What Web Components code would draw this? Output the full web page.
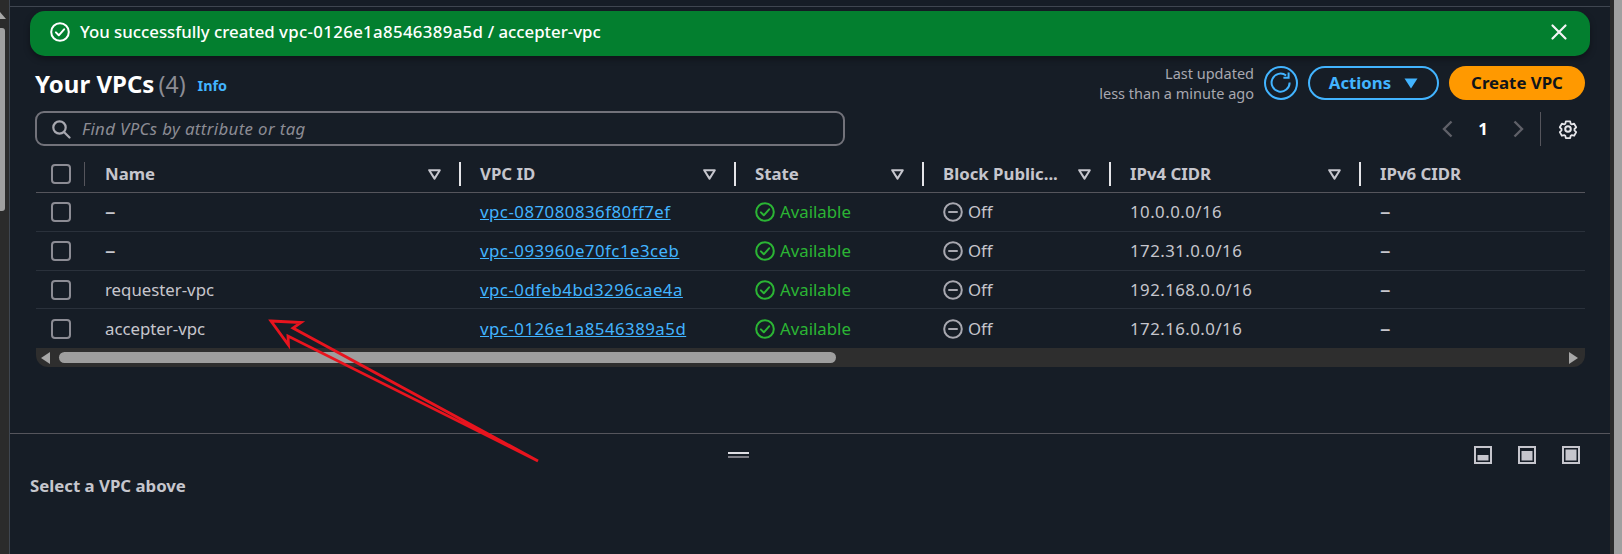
<!DOCTYPE html>
<html lang="en"><head><meta charset="utf-8"><title>Your VPCs</title>
<style>
html,body{margin:0;padding:0;height:554px;overflow:hidden;background:#161d26}
body{font:16.8px/24px "Noto Sans",sans-serif;color:#c6c6cd;position:relative}
</style></head><body>
<vpc-console></vpc-console>
<script>
const css=`*{box-sizing:border-box}svg{display:block;flex:none}`;
function el(name,html){
  customElements.define(name,class extends HTMLElement{
    constructor(){super();const r=this.attachShadow({mode:'open'});
      r.innerHTML='<style>'+css+html.css+'</style>'+(typeof html.body==='function'?html.body(this):html.body);}
  });
}
const CHECK=(c,s)=>`<svg width="${s}" height="${s}" viewBox="0 0 20 20" fill="none" stroke="${c}" stroke-width="2" stroke-linecap="round" stroke-linejoin="round"><circle cx="10" cy="10" r="8.8"/><path d="M5.9 10.4l2.9 2.9 5.3-6"/></svg>`;
el('flash-bar',{css:`:host{display:flex;align-items:center;height:45px;margin:4px 20px 0;padding:0 22px 3px 20px;background:#037f2f;border-radius:15px;color:#fff;box-shadow:0 3px 6px rgba(0,0,0,.35)}
span{margin-left:10px;flex:1;font-weight:500}b{font-weight:500;letter-spacing:.35px}`,
body:`${CHECK('#fff',20)}<span>You successfully created <b>vpc-0126e1a8546389a5d</b> / accepter-vpc</span>
<svg width="18" height="18" viewBox="0 0 18 18" fill="none" stroke="#f4f4f6" stroke-width="2.2" stroke-linecap="round"><path d="M2.5 2.5l13 13M15.5 2.5l-13 13"/></svg>`});

el('page-header',{css:`:host{display:flex;align-items:center;height:34px;margin:10px 25px 0 25px}
h1{margin:2px 0 0;font-size:24px;line-height:34px;font-weight:700;color:#fff}
h1 i{font-style:normal;font-weight:400;color:#8c8c94;font-size:23px;margin-left:-2px}
a{margin-left:12px;font-size:14.4px;font-weight:700;color:#42b4ff;margin-top:5px}
.upd{margin-left:auto;text-align:right;font-size:14.5px;line-height:20px;color:#a8a8b0}
.ref{width:34px;height:34px;margin-left:10px;border:2px solid #42b4ff;border-radius:50%;display:flex;align-items:center;justify-content:center}
.act{width:131px;height:34px;margin-left:10px;border:2px solid #42b4ff;border-radius:17px;display:flex;align-items:center;justify-content:center;gap:13px;color:#42b4ff;font-weight:700}
.new{width:136px;height:34px;margin-left:10px;border-radius:17px;background:#ff9900;color:#0f141a;font-weight:700;display:flex;align-items:center;justify-content:center}`,
body:`<h1>Your VPCs <i>(4)</i></h1><a>Info</a>
<div class="upd">Last updated<br>less than a minute ago</div>
<div class="ref"><svg width="24" height="24" viewBox="0 0 24 24" fill="none" stroke="#42b4ff" stroke-width="2"><path d="M20.6 11.5a9 9 0 1 1-3.5-7"/><path d="M19.6 1.5v5.2h-5.2" stroke-linejoin="miter"/></svg></div>
<div class="act">Actions<svg width="14" height="11" viewBox="0 0 14 11"><path d="M0.5 0.5h13L7 10.5z" fill="#42b4ff"/></svg></div>
<div class="new">Create VPC</div>`});

el('filter-row',{css:`:host{display:flex;align-items:center;height:35px;margin:11px 0 0 25px}
.s{width:810px;height:35px;border:2px solid #72727a;border-radius:9px;display:flex;align-items:center;padding-left:14px;gap:11px;color:#8c8c94;font-style:italic;letter-spacing:.38px}
.p{margin-left:auto;display:flex;align-items:center;height:34px}
.n{width:60px;text-align:center;color:#fff;font-weight:700;font-size:16.8px}
.bar{width:1px;height:34px;background:#55555c;margin:0 17px 0 16px}
.end{margin-right:32px}`,
body:`<div class="s"><svg width="20" height="20" viewBox="0 0 20 20" fill="none" stroke="#a8a8b0" stroke-width="2.2" stroke-linecap="round"><circle cx="8.5" cy="8.5" r="6.2"/><path d="M13 13l5.5 5.5"/></svg><span>Find VPCs by attribute or tag</span></div>
<div class="p"><svg width="11" height="18" viewBox="0 0 11 18" fill="none" stroke="#5f6068" stroke-width="2.4"><path d="M9.5 1.5L2 9l7.5 7.5"/></svg>
<div class="n">1</div>
<svg width="11" height="18" viewBox="0 0 11 18" fill="none" stroke="#5f6068" stroke-width="2.4"><path d="M1.5 1.5L9 9l-7.5 7.5"/></svg>
<div class="bar"></div>
<svg class="end" width="20" height="20" viewBox="0 0 20 20" fill="none" stroke="#e6e6ea" stroke-width="2" stroke-linejoin="round"><circle cx="10" cy="10" r="2.8"/><path d="M7.6 1.5h4.8l.6 2.6 1.3.8 2.5-.8 2.3 4-1.9 1.9 0 1.6 1.9 1.9-2.3 4-2.5-.8-1.3.8-.6 2.6-4.8 0-.6-2.6-1.3-.8-2.5.8-2.3-4 1.9-1.9 0-1.6-1.9-1.9 2.3-4 2.5.8 1.3-.8z" transform="translate(1 1) scale(.9)"/></svg></div>`});

const GRID='grid-template-columns:48px 375px 275px 188px 187px 250px 226px;';
const BOX=`<span class="box"></span>`;
const boxCss=`.box{display:block;width:20px;height:20px;border:2px solid #8c8c94;border-radius:4px;margin-left:15px}`;
const FILTER=`<svg width="13" height="11" viewBox="0 0 13 11" fill="none" stroke="#c6c6cd" stroke-width="2" stroke-linejoin="round"><path d="M1.2 1.2h10.6L6.5 9.6z"/></svg>`;
el('vpc-head',{css:`:host{display:grid;${GRID}height:39px;padding-top:2px;align-items:center;border-bottom:1px solid #55555c;margin:8px 25px 0 26px;font-weight:700;color:#c6c6cd}
${boxCss}
.c{height:24px;padding:0 18px 0 19px;border-left:2px solid #e4e4e8;display:flex;align-items:center;justify-content:space-between;white-space:nowrap}
.c.f{border-left:1px solid #55555c;padding-left:20px}`,
body:`<div>${BOX}</div>
<div class="c f">Name${FILTER}</div>
<div class="c">VPC ID${FILTER}</div>
<div class="c">State${FILTER}</div>
<div class="c">Block Public...${FILTER}</div>
<div class="c">IPv4 CIDR${FILTER}</div>
<div class="c">IPv6 CIDR</div>`});

const dash=v=>v==='–'?`<span class="d">–</span>`:v;
el('vpc-row',{css:`:host{display:grid;${GRID}height:39px;align-items:center;margin:0 25px 0 26px;border-bottom:1px solid #2a313b;white-space:nowrap}
:host([short]){height:38px}
:host([last]){border-bottom:0}
${boxCss}
.t{padding-left:21px}
.n{letter-spacing:.47px}
.d{font-size:21px;line-height:24px}
a{color:#42b4ff;text-decoration:underline;letter-spacing:.5px}
.st{display:flex;align-items:center;gap:5px}.av{color:#2bb534}`,
body:h=>{const g=k=>h.getAttribute(k);
return `<div>${BOX}</div><div class="t">${dash(g('name'))}</div><div class="t"><a>${g('vpc')}</a></div>
<div class="t st av">${CHECK('#2bb534',20)}Available</div>
<div class="t st"><svg width="20" height="20" viewBox="0 0 20 20" fill="none" stroke="#a8a8b0" stroke-width="2"><circle cx="10" cy="10" r="8.8"/><path d="M6 10h8" stroke-linecap="round"/></svg>Off</div>
<div class="t n">${g('cidr')}</div><div class="t"><span class="d">–</span></div>`}});

el('h-scroll',{css:`:host{display:flex;align-items:center;height:19px;margin:0 25px 0 26px;background:#2e2e2e;border-radius:0 0 12px 12px;padding:0 7px 0 5px}
.th{margin-left:9px;width:777px;height:11px;border-radius:6px;background:#9e9e9e}
.r{margin-left:auto}`,
body:`<svg width="9" height="12" viewBox="0 0 9 12"><path d="M9 0v12L0 6z" fill="#a8a8a8"/></svg><div class="th"></div><svg class="r" width="9" height="12" viewBox="0 0 9 12"><path d="M0 0v12L9 6z" fill="#a8a8a8"/></svg>`});

const pane=(y,h)=>`<svg width="18" height="18" viewBox="0 0 18 18"><rect x="1" y="1" width="16" height="16" fill="none" stroke="#c6c6cd" stroke-width="2"/><rect x="3.5" y="${y}" width="11" height="${h}" fill="#c6c6cd"/></svg>`;
el('split-panel',{css:`:host{display:block;margin-top:66px;border-top:1px solid #55555c;position:relative;height:120px;padding:0 20px}
.top{display:flex;align-items:flex-start;height:29px;padding-top:12px}
.h{margin-left:698px;width:21px;height:6px;margin-top:6px;border-top:2px solid #dedee3;border-bottom:2px solid #7c7c84}
.ic{margin-left:auto;display:flex;gap:26px;margin-right:10px}
.tt{margin-top:11px;font-weight:700;color:#c6c6cd;line-height:24px}`,
body:`<div class="top"><div class="h"></div><div class="ic">${pane(9,5.5)}${pane(5,9.5)}${pane(3.5,11)}</div></div><div class="tt">Select a VPC above</div>`});

el('vpc-console',{css:`:host{display:flex;height:554px;position:relative}
.ls{width:10px;background:#2b2b2b;border-right:1px solid #3f4650;position:relative;display:flex;flex-direction:column;padding-top:12px}
.up{width:0;height:0;border:6px solid transparent;border-top:0;border-bottom:7px solid #a8a8a8;margin-left:-6px}
.lt{width:5px;height:183px;margin-top:9px;background:#a0a0a0;border-radius:0 3px 3px 0}
.top{height:7px;border-bottom:1px solid #3f4650;background:#161d26}
main{flex:1;min-width:0}
.rs{width:12px;background:#2b2b2b;padding-left:4px}.rs div{height:100%;background:#a0a0a0}
.ar{position:absolute;left:0;top:0;pointer-events:none}`,
body:`<div class="ls"><div class="up"></div><div class="lt"></div></div>
<main><div class="top"></div>
<flash-bar></flash-bar>
<page-header></page-header><filter-row></filter-row><vpc-head></vpc-head>
<vpc-row name="–" vpc="vpc-087080836f80ff7ef" cidr="10.0.0.0/16"></vpc-row>
<vpc-row name="–" vpc="vpc-093960e70fc1e3ceb" cidr="172.31.0.0/16"></vpc-row>
<vpc-row short name="requester-vpc" vpc="vpc-0dfeb4bd3296cae4a" cidr="192.168.0.0/16"></vpc-row>
<vpc-row last name="accepter-vpc" vpc="vpc-0126e1a8546389a5d" cidr="172.16.0.0/16"></vpc-row>
<h-scroll></h-scroll><split-panel></split-panel></main>
<div class="rs"><div></div></div>
<svg class="ar" width="1622" height="554" fill="none" stroke="#e8141e" stroke-width="2.8" stroke-linejoin="miter"><path d="M271 321L301 322.5 293 328 538 461 288 336 288.5 345z"/></svg>`});
</script>
</body></html>
